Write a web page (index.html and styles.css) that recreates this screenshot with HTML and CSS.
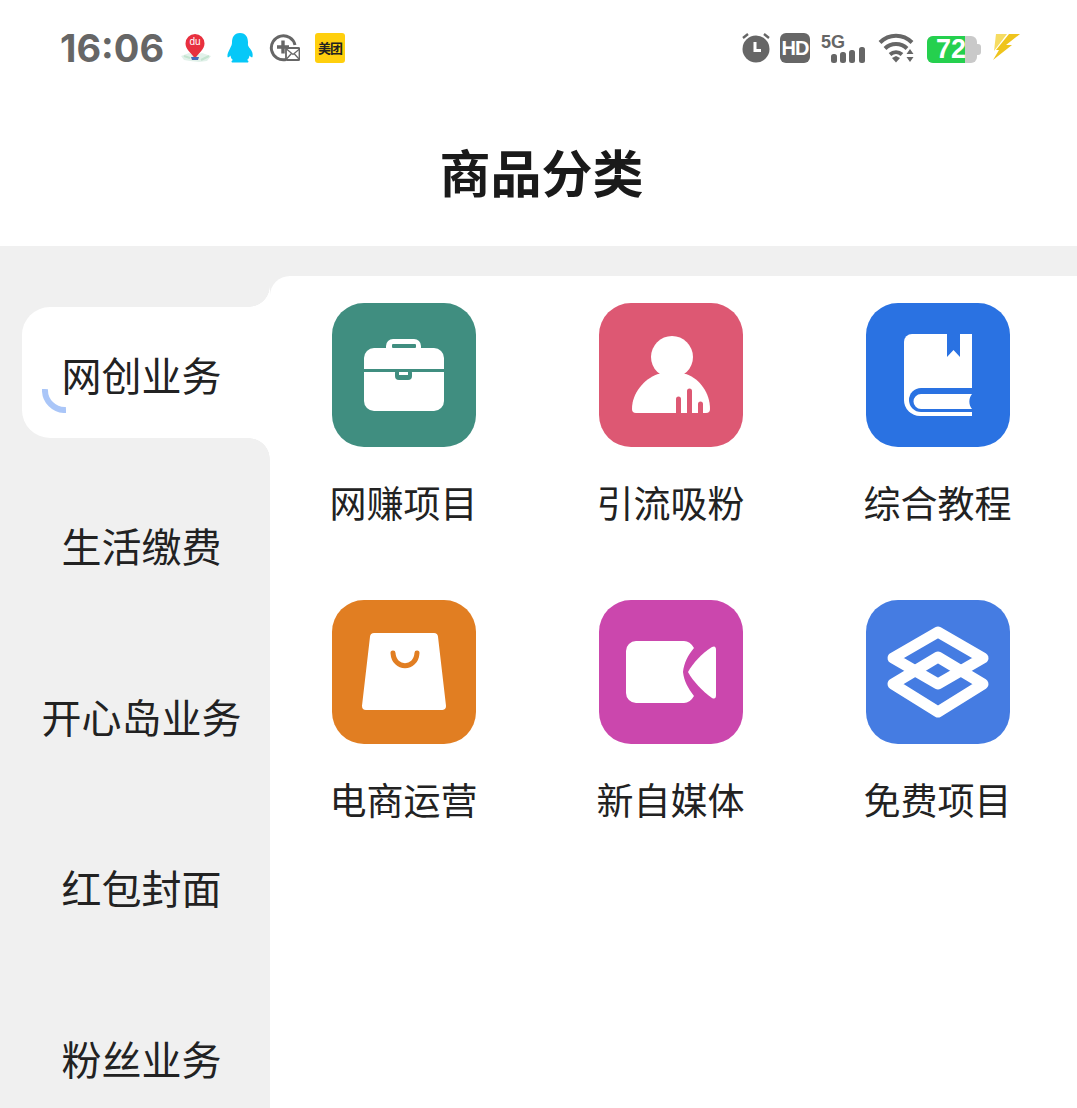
FILE: index.html
```html
<!DOCTYPE html>
<html lang="zh-CN">
<head>
    <meta charset="UTF-8">
    <title>商品分类</title>
    <link rel="stylesheet" href="styles.css">
</head>
<body>
<div class="page">
    <div class="status-bar">
        <div class="status-left">
            <span class="time">16:06</span>
            <svg class="ic-pin" viewBox="0 0 32 30">
                <path d="M1 23l8-3 6 2 7-2 9 3-4 5-8 1-9-1-6-1z" fill="#e2f1ea"/>
                <path d="M4 23l6 2M21 27l8-4" stroke="#c4e4d0" stroke-width="2" fill="none"/>
                <path d="M15 1a9.500 9.500 0 0 0-9.500 9.500c0 6 5.500 9 9.500 15 4-6 9.500-9 9.500-15A9.500 9.500 0 0 0 15 1z" fill="#e8303f"/>
                <path d="M11 24h8l-1 3h-6z" fill="#4668b8"/>
                <text class="pin-text" x="15" y="12" text-anchor="middle">du</text>
            </svg>
            <svg class="ic-qq" viewBox="0 0 26 30">
                <path d="M13 0C7 0 5 4.500 5 9.500c0 2-.5 3-2 6S0 21 .5 24c.5 1 2-.3 3-1.500.3 2 1 3.500 2.500 4.500-1.500.7-2 1.500-1 2.500h16c1-1 .5-1.800-1-2.500 1.500-1 2.200-2.500 2.500-4.500 1 1.200 2.500 2.500 3 1.500.5-3 0-5.500-2.500-8.500S21 11.500 21 9.500C21 4.500 19 0 13 0z" fill="#06c8f8"/>
            </svg>
            <svg class="ic-msg" viewBox="0 0 32 28">
                <path d="M18 25.500A12 12 0 1 1 27 11" fill="none" stroke="#666" stroke-width="3"/>
                <path d="M15 6.500v13M9 13h12" stroke="#666" stroke-width="3.400" fill="none"/>
                <rect x="18" y="14" width="13.500" height="12" rx="1" fill="#fff" stroke="#666" stroke-width="1.800"/>
                <path d="M18.500 15l6.500 5.500 6.500-5.500M18.500 25l5-5.500M31 25l-5-5.500" stroke="#666" stroke-width="1.300" fill="none"/>
            </svg>
            <span class="meituan">美团</span>
        </div>
        <div class="status-right">
            <svg class="ic-alarm" viewBox="0 0 28 30">
                <circle cx="14" cy="16" r="13.500" fill="#666"/>
                <path d="M1 5l5-4M27 5l-5-4" stroke="#666" stroke-width="2.400" fill="none"/>
                <path d="M13 9v8.500h6" stroke="#fff" stroke-width="3" fill="none"/>
            </svg>
            <svg class="ic-hd" viewBox="0 0 30 30">
                <rect width="30" height="30" rx="6" fill="#666"/>
                <text class="hd-text" x="15" y="22" text-anchor="middle">HD</text>
            </svg>
            <svg class="ic-signal" viewBox="0 0 47 31">
                <text class="sig-text" x="1" y="15">5G</text>
                <rect x="11" y="21" width="6" height="9" rx="2.500" fill="#666"/>
                <rect x="20" y="19" width="6" height="11" rx="2.500" fill="#666"/>
                <rect x="29" y="17" width="6" height="13" rx="2.500" fill="#666"/>
                <rect x="39" y="14" width="6" height="16" rx="2.500" fill="#666"/>
            </svg>
            <svg class="ic-wifi" viewBox="0 0 40 30">
                <path d="M3 9.500c9-9 23-9 32 0" stroke="#666" stroke-width="4" fill="none"/>
                <path d="M8 15.500c6-6 16-6 22 0" stroke="#666" stroke-width="4" fill="none"/>
                <path d="M13 21.500c3.500-3 8.500-3 12 0" stroke="#666" stroke-width="4" fill="none"/>
                <path d="M15 25l4-2 4 2-4 4.500z" fill="#666"/>
                <path d="M33 16l3.500 5h-7zM33 29l3.500-5h-7z" fill="#666"/>
            </svg>
            <div class="battery">
                <div class="battery-body">
                    <div class="battery-fill"></div>
                    <span class="battery-num">72</span>
                </div>
                <div class="battery-nub"></div>
            </div>
            <svg class="ic-bolt" viewBox="0 0 30 26">
                <path d="M5 0h11L3 17z" fill="#f6dc62"/>
                <path d="M18 0h11L15 11h6L2 26l6-10H5z" fill="#efc41c"/>
            </svg>
        </div>
    </div>

    <div class="title-bar">商品分类</div>

    <div class="main">
        <div class="sidebar">
            <div class="side-item active">
                <svg class="spinner" viewBox="0 0 24 24"><path d="M3 0a20 20 0 0 0 21 21" fill="none" stroke="#aac6f8" stroke-width="6"/></svg>
                网创业务
            </div>
            <div class="side-item">生活缴费</div>
            <div class="side-item">开心岛业务</div>
            <div class="side-item">红包封面</div>
            <div class="side-item">粉丝业务</div>
        </div>

        <div class="content">
            <div class="grid">
                <div class="cell">
                    <div class="icon teal">
                        <svg viewBox="0 0 144 144">
                            <rect x="54" y="36" width="35" height="16" rx="7" fill="#fff"/>
                            <rect x="60" y="41" width="24" height="4" rx="1" fill="#408e80"/>
                            <path d="M32 66V55a10 10 0 0 1 10-10h60a10 10 0 0 1 10 10v11z" fill="#fff"/>
                            <path d="M32 69h80v29a10 10 0 0 1-10 10H42a10 10 0 0 1-10-10z" fill="#fff"/>
                            <rect x="63" y="66" width="17" height="11" rx="4" fill="#408e80"/>
                            <rect x="67" y="69" width="9" height="3" fill="#fff"/>
                        </svg>
                    </div>
                    <div class="label">网赚项目</div>
                </div>
                <div class="cell">
                    <div class="icon pink">
                        <svg viewBox="0 0 144 144">
                            <circle cx="73" cy="54" r="21" fill="#fff"/>
                            <path d="M33 106C33 90 45 76 59 71H87C101 76 111 90 111 106q0 4-4 4H37q-4 0-4-4z" fill="#fff"/>
                            <path d="M79.500 96v16M90.500 88v24M101.500 101v11" stroke="#dd5873" stroke-width="5" stroke-linecap="round" fill="none"/>
                        </svg>
                    </div>
                    <div class="label">引流吸粉</div>
                </div>
                <div class="cell">
                    <div class="icon blue">
                        <svg viewBox="0 0 144 144">
                            <path d="M38 39a8 8 0 0 1 8-8h60v82H54a16 16 0 0 1-16-16z" fill="#fff"/>
                            <path d="M81 31h13v23l-6.500-7-6.500 7z" fill="#2a72e2"/>
                            <path d="M106 85H55a12 12 0 0 0 0 24h51z" fill="#2a72e2"/>
                            <path d="M106 91H55a7.500 7.500 0 0 0 0 15h51c-3.500-4-3.500-11 0-15z" fill="#fff"/>
                        </svg>
                    </div>
                    <div class="label">综合教程</div>
                </div>
                <div class="cell">
                    <div class="icon orange">
                        <svg viewBox="0 0 144 144">
                            <path d="M42 37h60l8 69H34z" fill="#fff" stroke="#fff" stroke-width="8" stroke-linejoin="round"/>
                            <path d="M61 53c1 17 23 17 24 0" fill="none" stroke="#e17e22" stroke-width="5" stroke-linecap="round"/>
                        </svg>
                    </div>
                    <div class="label">电商运营</div>
                </div>
                <div class="cell">
                    <div class="icon magenta">
                        <svg viewBox="0 0 144 144">
                            <path d="M37 41h48q6 0 10 7c-6 7-10 15-11 24 1 9 5 16 11 24q-4 7-10 7H37a10 10 0 0 1-10-10V51a10 10 0 0 1 10-10z" fill="#fff"/>
                            <path d="M113 47c-10 6-19 16-24 25 5 9 14 19 24 26q4 2 4-3V50q0-5-4-3z" fill="#fff"/>
                        </svg>
                    </div>
                    <div class="label">新自媒体</div>
                </div>
                <div class="cell">
                    <div class="icon sky">
                        <svg viewBox="0 0 144 144">
                            <path d="M72 32l45 26-45 26-45-26z" fill="none" stroke="#fff" stroke-width="11" stroke-linejoin="round"/>
                            <path d="M72 57l45 27-45 28-45-28z" fill="none" stroke="#fff" stroke-width="11" stroke-linejoin="round"/>
                        </svg>
                    </div>
                    <div class="label">免费项目</div>
                </div>
            </div>
        </div>
    </div>
</div>
</body>
</html>
```

FILE: styles.css
```css
* {
    box-sizing: border-box;
}
html, body {
    margin: 0;
    padding: 0;
    background-color: #fff;
}
body {
    font-family: "Noto Sans CJK SC", "Noto Sans", sans-serif;
    color: #222;
}
svg {
    display: block;
}
.page {
    height: 100vh;
    display: flex;
    flex-direction: column;
    overflow: hidden;
}

/* status bar */
.status-bar {
    height: 96px;
    flex: none;
    padding: 0 56px 0 60px;
    display: flex;
    align-items: center;
    justify-content: space-between;
}
.status-left,
.status-right {
    display: flex;
    align-items: center;
}
.status-left {
    gap: 15px;
}
.status-right {
    gap: 10px;
}
.time {
    width: 105px;
    font-family: Inter, "Liberation Sans", sans-serif;
    font-size: 38px;
    font-weight: 700;
    color: #666;
}
.ic-pin {
    width: 32px;
    height: 30px;
}
.ic-qq {
    width: 26px;
    height: 30px;
}
.ic-msg {
    width: 32px;
    height: 28px;
}
.pin-text {
    font-family: "Liberation Sans", sans-serif;
    font-size: 10px;
    fill: #fff;
}
.meituan {
    width: 30px;
    height: 30px;
    border-radius: 3px;
    background-color: #ffcf0d;
    color: #222;
    font-size: 13px;
    font-weight: 700;
    line-height: 30px;
    text-align: center;
    white-space: nowrap;
    letter-spacing: -1px;
}
.ic-alarm {
    width: 28px;
    height: 30px;
}
.ic-hd {
    width: 30px;
    height: 30px;
}
.hd-text {
    font-family: "Liberation Sans", sans-serif;
    font-size: 20px;
    font-weight: 700;
    letter-spacing: -1px;
    fill: #fff;
}
.ic-signal {
    width: 47px;
    height: 31px;
    overflow: visible;
}
.sig-text {
    font-family: "Liberation Sans", sans-serif;
    font-size: 18px;
    font-weight: 700;
    fill: #666;
}
.ic-wifi {
    width: 40px;
    height: 30px;
}
.battery {
    width: 54px;
    height: 27px;
    margin-top: 2px;
    display: flex;
    align-items: center;
}
.battery-body {
    position: relative;
    width: 50px;
    height: 27px;
    border-radius: 6px;
    background-color: #c9c9c9;
}
.battery-fill {
    width: 38px;
    height: 100%;
    border-radius: 6px 0 0 6px;
    background-color: #25d04e;
}
.battery-num {
    position: absolute;
    left: 9px;
    top: 0;
    font-family: "Liberation Sans", sans-serif;
    font-size: 27px;
    font-weight: 700;
    line-height: 27px;
    color: #fff;
}
.battery-nub {
    width: 4px;
    height: 11px;
    border-radius: 0 3px 3px 0;
    background-color: #c9c9c9;
}
.ic-bolt {
    width: 30px;
    height: 26px;
    margin-top: -3px;
}

/* title */
.title-bar {
    height: 150px;
    flex: none;
    padding-left: 6px;
    display: flex;
    align-items: center;
    justify-content: center;
    font-size: 51px;
    font-weight: 700;
    color: #1a1a1a;
}

/* sidebar + content */
.main {
    flex: 1;
    min-height: 0;
    display: flex;
    background-color: #f0f0f0;
    overflow: hidden;
}
.sidebar {
    width: 270px;
    flex: none;
    padding: 61px 0 0 22px;
    display: flex;
    flex-direction: column;
    gap: 40px;
}
.side-item {
    position: relative;
    height: 131px;
    flex: none;
    padding: 2px 9px 0 0;
    display: flex;
    align-items: center;
    justify-content: center;
    font-size: 40px;
    white-space: nowrap;
}
.side-item.active {
    background-color: #fff;
    border-radius: 28px 0 0 28px;
}
.side-item.active::before,
.side-item.active::after {
    content: "";
    position: absolute;
    right: 0;
    width: 21px;
    height: 21px;
}
.side-item.active::before {
    bottom: 100%;
    background: radial-gradient(circle at 0 0, #f0f0f0 20.5px, #fff 21px);
}
.side-item.active::after {
    top: 100%;
    background: radial-gradient(circle at 0 100%, #f0f0f0 20.5px, #fff 21px);
}
.spinner {
    position: absolute;
    left: 20px;
    top: 82px;
    width: 24px;
    height: 24px;
}
.content {
    flex: 1;
    margin-top: 30px;
    padding-top: 27px;
    background-color: #fff;
    border-top-left-radius: 20px;
}
.grid {
    display: grid;
    grid-template-columns: repeat(3, 267px);
    row-gap: 58px;
}
.cell {
    display: flex;
    flex-direction: column;
    align-items: center;
    gap: 25px;
}
.icon {
    width: 144px;
    height: 144px;
    border-radius: 32px;
    overflow: hidden;
}
.teal { background-color: #408e80; }
.pink { background-color: #dd5873; }
.blue { background-color: #2a72e2; }
.orange { background-color: #e17e22; }
.magenta { background-color: #cb47ad; }
.sky { background-color: #457ce2; }
.label {
    font-size: 37px;
    line-height: 80px;
    height: 80px;
    margin-top: -10px;
    white-space: nowrap;
}
```
